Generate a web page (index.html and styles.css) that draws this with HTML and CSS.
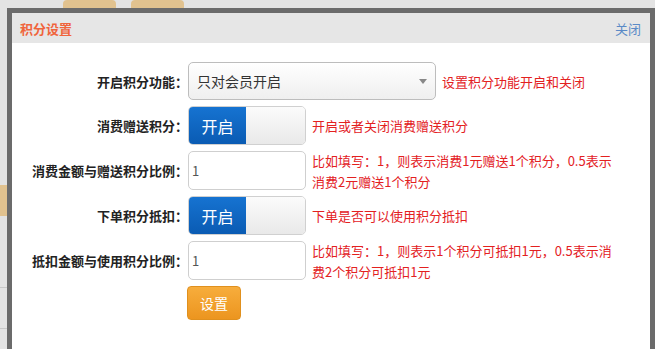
FILE: index.html
```html
<!DOCTYPE html>
<html lang="zh-CN">
<head>
    <meta charset="UTF-8">
    <title>积分设置</title>
    <link rel="stylesheet" href="styles.css">
</head>
<body>
    <!-- Halaman belakang -->
    <div class="page">
        <div class="page-tabs">
            <span class="page-tab"></span>
            <span class="page-tab"></span>
        </div>
        <div class="page-side">
            <div class="side-block"></div>
            <div class="side-line first"></div>
            <div class="side-line"></div>
        </div>
    </div>

    <!-- Dialog -->
    <div class="dialog">
        <div class="dialog-header">
            <span class="dialog-title">积分设置</span>
            <a class="dialog-close" href="#">关闭</a>
        </div>
        <div class="dialog-body">
            <div class="form-row">
                <label class="form-label">开启积分功能：</label>
                <div class="select-box">
                    <span>只对会员开启</span>
                    <span class="select-arrow"></span>
                </div>
                <span class="form-hint">设置积分功能开启和关闭</span>
            </div>
            <div class="form-row">
                <label class="form-label">消费赠送积分：</label>
                <div class="switch">
                    <span class="switch-on">开启</span>
                    <span class="switch-off"></span>
                </div>
                <span class="form-hint">开启或者关闭消费赠送积分</span>
            </div>
            <div class="form-row">
                <label class="form-label">消费金额与赠送积分比例：</label>
                <input class="text-input" type="text" value="1">
                <span class="form-hint">比如填写：1，则表示消费1元赠送1个积分，0.5表示<br>消费2元赠送1个积分</span>
            </div>
            <div class="form-row">
                <label class="form-label">下单积分抵扣：</label>
                <div class="switch">
                    <span class="switch-on">开启</span>
                    <span class="switch-off"></span>
                </div>
                <span class="form-hint">下单是否可以使用积分抵扣</span>
            </div>
            <div class="form-row">
                <label class="form-label">抵扣金额与使用积分比例：</label>
                <input class="text-input" type="text" value="1">
                <span class="form-hint">比如填写：1，则表示1个积分可抵扣1元，0.5表示消<br>费2个积分可抵扣1元</span>
            </div>
            <div class="form-row">
                <span class="form-label"></span>
                <button class="submit-button">设置</button>
            </div>
        </div>
    </div>
</body>
</html>
```

FILE: styles.css
```css
/* CSS Styles */
* {
    margin: 0;
    padding: 0;
    box-sizing: border-box;
    font-family: "Noto Sans CJK SC", "Liberation Sans", sans-serif;
}

body {
    background-color: #e3e3e3;
    height: 349px;
    overflow: hidden;
    position: relative;
}

/* Halaman belakang */
.page-tabs {
    display: flex;
    gap: 15px;
    padding-left: 63px;
    height: 8px;
    overflow: hidden;
}

.page-tab {
    width: 53px;
    height: 20px;
    background-color: #e1c28f;
    border-radius: 4px;
}

.page-side {
    width: 7px;
    padding-top: 177px;
}

.side-block {
    height: 31px;
    background-color: #e1c28f;
}

.side-line {
    height: 1px;
    background-color: #c8c8c8;
    margin-top: 40px;
}

.side-line.first {
    margin-top: 71px;
}

/* Dialog */
.dialog {
    position: absolute;
    left: 7px;
    top: 8px;
    width: 648px;
    height: 341px;
    border: 5px solid #6b6b6b;
    border-bottom: none;
    background-color: #fff;
    overflow: hidden;
}

.dialog-header {
    height: 30px;
    background-color: #e6e6e6;
    display: flex;
    justify-content: space-between;
    align-items: center;
    padding: 0 9px 0 8px;
}

.dialog-title {
    color: #f0643c;
    font-size: 13px;
    font-weight: bold;
}

.dialog-close {
    color: #5a8ac6;
    font-size: 13px;
    text-decoration: none;
}

.dialog-body {
    padding-top: 19px;
    display: flex;
    flex-direction: column;
    gap: 6px;
}

.form-row {
    display: flex;
    align-items: center;
}

.form-label {
    width: 176px;
    flex-shrink: 0;
    text-align: right;
    font-size: 13px;
    font-weight: bold;
    color: #222;
}

.form-hint {
    color: #e3211f;
    font-size: 13px;
    line-height: 21px;
    margin: -2px 0 -2px 6px;
    white-space: nowrap;
}

.select-box {
    width: 248px;
    height: 38px;
    flex-shrink: 0;
    border: 1px solid #bdbdbd;
    border-radius: 5px;
    background: linear-gradient(#ffffff, #efefef);
    display: flex;
    justify-content: space-between;
    align-items: center;
    padding: 0 8px;
    font-size: 14px;
    color: #333;
}

.select-arrow {
    width: 0;
    height: 0;
    border-left: 4px solid transparent;
    border-right: 4px solid transparent;
    border-top: 5px solid #888;
}

.switch {
    width: 118px;
    height: 39px;
    flex-shrink: 0;
    border: 1px solid #d0d0d0;
    border-radius: 5px;
    overflow: hidden;
    display: flex;
}

.switch-on {
    width: 57px;
    background: linear-gradient(#1673d1, #0a5bb3);
    color: #fff;
    font-size: 16px;
    display: flex;
    align-items: center;
    justify-content: center;
}

.switch-off {
    flex-grow: 1;
    background: linear-gradient(#fbfbfb, #e9e9e9);
}

.text-input {
    width: 118px;
    height: 39px;
    flex-shrink: 0;
    border: 1px solid #cfcfcf;
    border-radius: 5px;
    padding: 0 3px;
    font-size: 13px;
    color: #555;
    outline: none;
}

.submit-button {
    width: 54px;
    height: 34px;
    border: 1px solid #e0901e;
    border-radius: 4px;
    background: linear-gradient(#f7ad3c, #ec951f);
    color: #fff;
    font-size: 14px;
    margin-left: -1px;
}
```
